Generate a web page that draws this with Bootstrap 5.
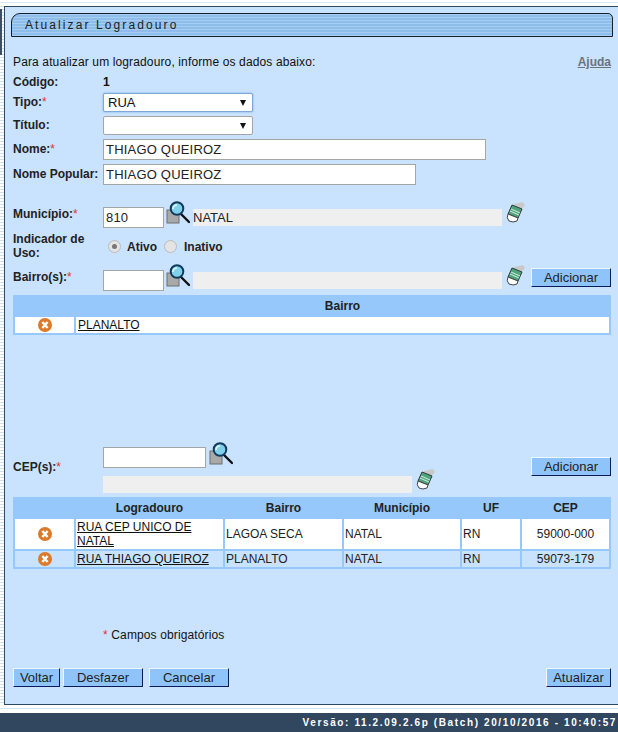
<!DOCTYPE html>
<html lang="pt">
<head>
<meta charset="utf-8">
<title>Atualizar Logradouro</title>
<link rel="stylesheet" href="https://cdn.jsdelivr.net/npm/bootstrap@5.3.0/dist/css/bootstrap.min.css">
<style>
html,body{height:732px;overflow:hidden}
body{margin:0;font-family:"Liberation Sans",Arial,sans-serif;font-size:12px;color:#111;background:#fff;display:flex;flex-direction:column;line-height:14px}
.shell{height:713px;display:flex;padding-top:6px;padding-bottom:8px;background:linear-gradient(#d5e6f5,#d5e6f5) 0 2px/100% 1px no-repeat,linear-gradient(#d5e6f5,#d5e6f5) 0 708px/100% 1px no-repeat,#fff}
.rail{width:4px;flex:none;background:repeating-linear-gradient(#cfe0ef 0 1px,#fff 1px 3px)}
.rail-bar{width:2px;height:46px;margin-top:3px;background:#3a5068}
.sheet{flex:1;background:#c9e2fd;border:1px solid #2e4a62;border-right:0;padding:6px 7px 0 8px;display:flex;flex-direction:column}
.titlebar{height:24px;margin:0 -2px;border:1px solid #14202c;border-radius:9px 5px 0 0;background:repeating-linear-gradient(#a6cdf3 0 1px,#8fbde9 1px 3px);padding:4px 0 0 13px;font-size:12px;letter-spacing:2.1px;color:#222}
.foot{height:19px;background:#30475f;color:#fff;font-weight:700;font-size:10px;letter-spacing:1.62px;text-align:right;padding:3px 1px 0 0}
.intro{letter-spacing:.13px}
.fr{display:flex;align-items:flex-start}
.lab{width:90px;font-weight:700;flex:none;color:#222}
.lab-off{padding-top:2px}
.lab-off2{padding-top:3px}
.req{color:#d33;font-weight:400}
.tx{height:21px;background:#fff;border:1px solid #a5a5a5;font-size:13px;padding:0 1px 0 2px;line-height:19px;color:#222;letter-spacing:.2px}
.sel{height:19px;background:#fff;border:1px solid #a5a5a5;width:150px;border-radius:2px;font-size:13px;line-height:17px;padding-left:4px;display:flex;justify-content:space-between;align-items:center;padding-right:6px}
.sel-on{border-color:#7fa8d6;box-shadow:0 0 2px #6ea3dc}
.tri{width:0;height:0;border-left:3px solid transparent;border-right:3px solid transparent;border-top:6px solid #111}
.ro{height:17px;background:#efefef;font-size:13px;line-height:17px;color:#222;width:309px;margin-left:3px;margin-top:2px}
.bt{height:19px;background:#8fc4fb;border:1px solid;border-color:#eef6ff #0a1a5c #0a1a5c #eef6ff;font-size:13px;line-height:16px;text-align:center;color:#222;padding:0}
.ic{flex:none;display:block}
.lupa{margin:-6px 0 0 2px}
.borr{margin:-6px 0 0 4px}
.dot{width:13px;height:13px;border:1px solid #bbb;border-radius:50%;background:#e4e4e4;display:inline-block;position:relative}
.dot-on::after{content:"";position:absolute;left:3px;top:3px;width:5px;height:5px;border-radius:50%;background:#777}
.opt{padding-top:2px}
.tbl{width:598px}
.hd{height:22px;background:#96c8fb;font-weight:700;color:#222;display:grid;align-items:center;text-align:center;padding:0 2px;column-gap:2px}
.rw{display:grid;background:#96c8fb;padding:0 2px 2px;column-gap:2px}
.cell{display:flex;align-items:center;padding-left:1px;color:#222}
.cell a{color:#111}
.cell-b{padding-left:2px}
.rwh{background:#fff}
.rwl{background:#c9e2fd}
.cols{grid-template-columns:59px 147px 117px 116px 58px 87px}
.cols-b{grid-template-columns:59px 1fr}
</style>
</head>
<body>
<svg width="0" height="0" class="position-absolute">
<defs>
<symbol id="lupa" viewBox="0 0 24 23">
<rect x="1" y="9" width="12" height="13" fill="#a9a9a9" stroke="#6f6f6f"/>
<path d="M15 13L23 21" stroke="#111" stroke-width="2.4" stroke-linecap="round"/>
<circle cx="11" cy="7.5" r="6.3" fill="#7fd0ea" stroke="#123a5c" stroke-width="2"/>
<path d="M7 8a4 4 0 0 1 4-4" stroke="#e6f7fc" stroke-width="1.6" fill="none"/>
</symbol>
<symbol id="borracha" viewBox="0 0 20 22">
<path d="M8 3L17 1L19 4L15 9L8 5Z" fill="#c9c9c9"/>
<path d="M6 4L16 8L12 17L2 13Z" fill="#4fa37e" stroke="#2c3b35" stroke-width="1"/>
<path d="M5 8L14 12M4 10L13 14" stroke="#bfe6d0" stroke-width="1.2"/>
<path d="M2 13L12 17L11 20Q7 22 3 20Q0 17 2 13Z" fill="#fff" stroke="#444" stroke-width="1"/>
</symbol>
<symbol id="xis" viewBox="0 0 14 14">
<circle cx="7" cy="7" r="7" fill="#dd7a29"/>
<path d="M4.4 4L9.6 10M9.6 4L4.4 10" stroke="#fff" stroke-width="2.4"/>
</symbol>
</defs>
</svg>
<div class="shell">
<div class="rail"><div class="rail-bar"></div></div>
<main class="sheet">
<div class="titlebar">Atualizar Logradouro</div>
<div class="d-flex justify-content-between" style="padding-top:18px;height:36px">
<span class="intro">Para atualizar um logradouro, informe os dados abaixo:</span>
<a href="#" class="fw-bold" style="color:#6a7480">Ajuda</a>
</div>
<div class="fr" style="height:20px;padding-top:2px"><div class="lab">Código:</div><b>1</b></div>
<div class="fr" style="height:23px"><div class="lab lab-off">Tipo:<span class="req">*</span></div><div class="sel sel-on"><span>RUA</span><i class="tri"></i></div></div>
<div class="fr" style="height:23px"><div class="lab lab-off">Título:</div><div class="sel"><span></span><i class="tri"></i></div></div>
<div class="fr" style="height:25px"><div class="lab lab-off2">Nome:<span class="req">*</span></div><div class="tx" style="width:383px">THIAGO QUEIROZ</div></div>
<div class="fr" style="height:43px"><div class="lab lab-off2">Nome Popular:</div><div class="tx" style="width:313px">THIAGO QUEIROZ</div></div>
<div class="fr" style="height:25px"><div class="lab">Município:<span class="req">*</span></div><div class="tx" style="width:61px">810</div><svg class="ic lupa" width="24" height="23"><use href="#lupa"/></svg><div class="ro">NATAL</div><svg class="ic borr" width="20" height="22"><use href="#borracha"/></svg></div>
<div class="fr" style="height:38px"><div class="lab">Indicador de Uso:</div><div class="d-flex align-items-center fw-bold" style="height:28px;padding-left:5px;color:#222"><i class="dot dot-on"></i><span class="opt" style="margin-left:6px">Ativo</span><i class="dot" style="margin-left:7px"></i><span class="opt" style="margin-left:7px">Inativo</span></div></div>
<div class="fr" style="height:25px"><div class="lab">Bairro(s):<span class="req">*</span></div><div class="tx" style="width:61px">&nbsp;</div><svg class="ic lupa" width="24" height="23"><use href="#lupa"/></svg><div class="ro"></div><svg class="ic borr" width="20" height="22"><use href="#borracha"/></svg><button class="bt ms-auto" style="width:80px;margin-top:-2px">Adicionar</button></div>
<div class="tbl">
<div class="hd cols-b"><span></span><span>Bairro</span></div>
<div class="rw cols-b" style="height:18px"><div class="cell rwh justify-content-center p-0"><svg width="14" height="14"><use href="#xis"/></svg></div><div class="cell cell-b rwh"><a href="#">PLANALTO</a></div></div>
</div>
<div class="fr" style="margin-top:112px;height:29px"><div class="lab" style="margin-top:13px">CEP(s):<span class="req">*</span></div><div class="tx" style="width:103px">&nbsp;</div><svg class="ic" width="24" height="23" style="margin:-5px 0 0 3px"><use href="#lupa"/></svg><button class="bt ms-auto" style="width:80px;margin-top:10px">Adicionar</button></div>
<div class="fr" style="height:21px;padding-left:90px"><div class="ro m-0"></div><svg class="ic" width="20" height="22" style="margin:-8px 0 0 4px"><use href="#borracha"/></svg></div>
<div class="tbl">
<div class="hd cols"><span></span><span>Logradouro</span><span>Bairro</span><span>Município</span><span>UF</span><span>CEP</span></div>
<div class="rw cols" style="height:32px"><div class="cell rwh justify-content-center p-0"><svg width="14" height="14"><use href="#xis"/></svg></div><div class="cell rwh"><a href="#">RUA CEP UNICO DE NATAL</a></div><div class="cell rwh">LAGOA SECA</div><div class="cell rwh">NATAL</div><div class="cell rwh">RN</div><div class="cell rwh justify-content-center p-0">59000-000</div></div>
<div class="rw cols" style="height:18px"><div class="cell rwl justify-content-center p-0"><svg width="14" height="14"><use href="#xis"/></svg></div><div class="cell rwl"><a href="#">RUA THIAGO QUEIROZ</a></div><div class="cell rwl">PLANALTO</div><div class="cell rwl">NATAL</div><div class="cell rwl">RN</div><div class="cell rwl justify-content-center p-0">59073-179</div></div>
</div>
<div class="intro" style="margin-top:59px;padding-left:90px"><span class="req">*</span> Campos obrigatórios</div>
<div class="d-flex align-items-start tbl" style="margin-top:26px">
<button class="bt" style="width:47px">Voltar</button>
<button class="bt" style="width:80px;margin-left:3px">Desfazer</button>
<button class="bt" style="width:80px;margin-left:6px">Cancelar</button>
<button class="bt ms-auto" style="width:65px">Atualizar</button>
</div>
</main>
</div>
<footer class="foot">Versão: 11.2.09.2.6p (Batch) 20/10/2016 - 10:40:57</footer>
</body>
</html>
